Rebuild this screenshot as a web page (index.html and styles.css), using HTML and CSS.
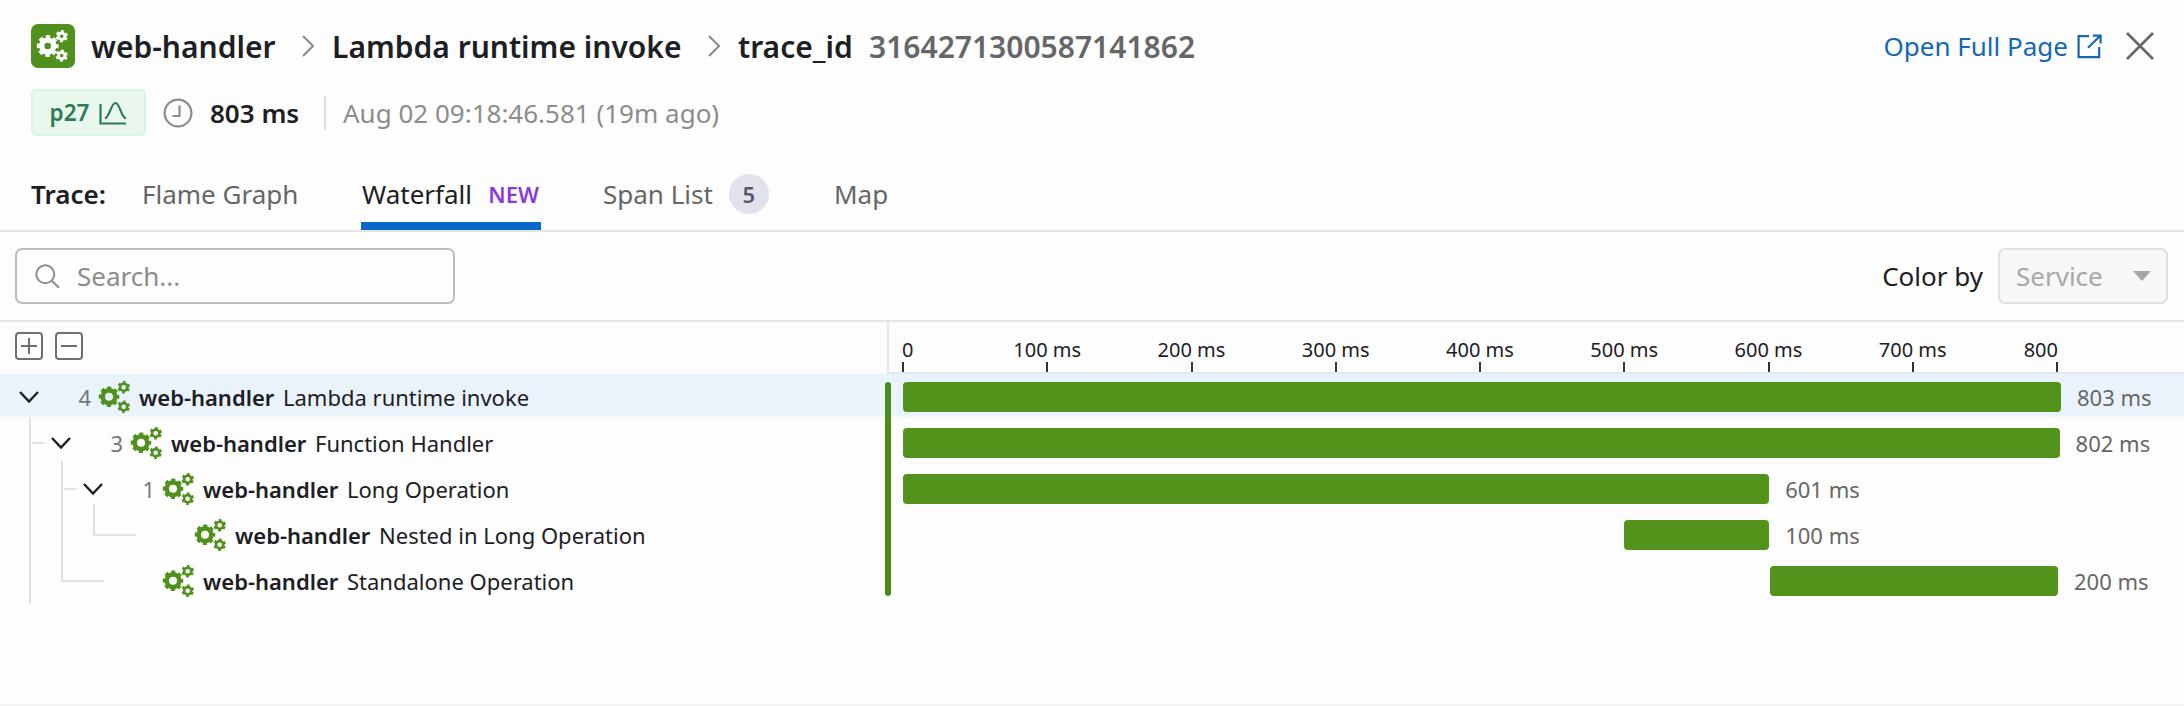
FILE: index.html
```html
<!DOCTYPE html>
<html lang="en">
<head>
    <meta charset="UTF-8">
    <meta name="viewport" content="width=device-width, initial-scale=1.0">
    <title>web-handler - Lambda runtime invoke</title>
    <link rel="stylesheet" href="styles.css">
</head>
<body>
    <!-- shared icons -->
    <svg class="defs" width="0" height="0">
        <symbol id="gears" viewBox="0 0 32 32">
            <g fill="none" stroke="currentColor">
                <circle cx="11" cy="15.7" r="6.3" stroke-width="4.6"/>
                <circle cx="11" cy="15.7" r="8.9" stroke-width="2.8" stroke-dasharray="4 2.99" stroke-dashoffset="2"/>
                <circle cx="25.7" cy="6.3" r="3.6" stroke-width="2.6"/>
                <circle cx="25.7" cy="6.3" r="5.2" stroke-width="2.2" stroke-dasharray="2.7 2.745" stroke-dashoffset="4.1"/>
                <circle cx="25.7" cy="25.7" r="3.6" stroke-width="2.6"/>
                <circle cx="25.7" cy="25.7" r="5.2" stroke-width="2.2" stroke-dasharray="2.7 2.745" stroke-dashoffset="4.1"/>
            </g>
        </symbol>
        <symbol id="arrow" viewBox="0 0 20 12">
            <path d="M1 1l9 9.5L19 1" fill="none" stroke="currentColor" stroke-width="2.4"/>
        </symbol>
        <symbol id="crumb" viewBox="0 0 12 22">
            <path d="M1 1l10 10L1 21" fill="none" stroke="currentColor" stroke-width="2"/>
        </symbol>
    </svg>

    <div class="panel">
        <div class="title">
            <span class="logo">
                <svg width="44" height="44" viewBox="0 0 44 44" fill="none" stroke="#fff">
                    <circle cx="16.7" cy="22" r="6" stroke-width="5.4"/>
                    <circle cx="16.7" cy="22" r="9.4" stroke-width="3" stroke-dasharray="4.4 2.983" stroke-dashoffset="2.2"/>
                    <circle cx="30.7" cy="12.2" r="3.2" stroke-width="2.8"/>
                    <circle cx="30.7" cy="12.2" r="5" stroke-width="2.2" stroke-dasharray="2.9 2.336" stroke-dashoffset="4"/>
                    <circle cx="30.7" cy="31.6" r="3.2" stroke-width="2.8"/>
                    <circle cx="30.7" cy="31.6" r="5" stroke-width="2.2" stroke-dasharray="2.9 2.336" stroke-dashoffset="4"/>
                </svg>
            </span>
            <span class="name service">web-handler</span>
            <svg class="crumb" width="12" height="22"><use href="#crumb"/></svg>
            <span class="name resource">Lambda runtime invoke</span>
            <svg class="crumb" width="12" height="22"><use href="#crumb"/></svg>
            <span class="name trace">trace_id</span>
            <span class="name id">3164271300587141862</span>
            <a class="open" href="javascript:;">Open Full Page
                <svg width="25" height="25" viewBox="0 0 25 25" fill="none" stroke="currentColor" stroke-width="2.2">
                    <path d="M12 2.2H1.6v21h20.6V13"/>
                    <path d="M11 13.8L23 2M15.8 1.6h7.8v8"/>
                </svg>
            </a>
            <a class="close" href="javascript:;">
                <svg width="28" height="28" viewBox="0 0 28 28" fill="none" stroke="currentColor" stroke-width="2.6">
                    <path d="M1 1l26 26M27 1L1 27"/>
                </svg>
            </a>
        </div>

        <div class="info">
            <span class="pct">p27
                <svg width="28" height="24" viewBox="0 0 28 24" fill="none" stroke="currentColor" stroke-width="2.2">
                    <path d="M1.5 3v19.5H27"/>
                    <path d="M6 17.5C11 15.500 12 2 16.500 2S21.500 15.500 27 17.500"/>
                </svg>
            </span>
            <svg class="clock" width="30" height="30" viewBox="0 0 30 30" fill="none" stroke="currentColor" stroke-width="2.2">
                <circle cx="15" cy="15" r="13.4"/>
                <path d="M16.500 7.500v10.500H9.500"/>
            </svg>
            <b class="total">803 ms</b>
            <span class="date">Aug 02 09:18:46.581 (19m ago)</span>
        </div>

        <nav class="tabs">
            <b class="label">Trace:</b>
            <a class="tab flame">Flame Graph</a>
            <a class="tab active">Waterfall <em>NEW</em></a>
            <a class="tab list">Span List <i>5</i></a>
            <a class="tab">Map</a>
        </nav>

        <div class="tools">
            <div class="search">
                <svg width="25" height="25" viewBox="0 0 25 25" fill="none" stroke="currentColor" stroke-width="2">
                    <circle cx="10.300" cy="10.300" r="9"/>
                    <path d="M16.800 16.800l7.200 7"/>
                </svg>
                Search...
            </div>
            <div class="color">
                <span>Color by</span>
                <div class="select">Service
                    <svg width="18" height="10" viewBox="0 0 18 10"><path d="M0 0h18L9 10z" fill="#a6a6a6"/></svg>
                </div>
            </div>
        </div>

        <div class="head">
            <div class="expand">
                <svg width="28" height="28" viewBox="0 0 28 28" fill="none" stroke="currentColor" stroke-width="2">
                    <rect x="1" y="1" width="26" height="26" rx="3"/>
                    <path d="M6 14h16M14 6v16"/>
                </svg>
                <svg width="28" height="28" viewBox="0 0 28 28" fill="none" stroke="currentColor" stroke-width="2">
                    <rect x="1" y="1" width="26" height="26" rx="3"/>
                    <path d="M6 14h16"/>
                </svg>
            </div>
            <div class="axis">
                <span>0</span>
                <span>100 ms</span>
                <span>200 ms</span>
                <span>300 ms</span>
                <span>400 ms</span>
                <span>500 ms</span>
                <span>600 ms</span>
                <span>700 ms</span>
                <span>800</span>
            </div>
        </div>

        <div class="rows">
            <div class="row selected">
                <div class="span">
                    <svg class="arrow" width="20" height="12"><use href="#arrow"/></svg>
                    <span class="count">4</span>
                    <svg class="gears" width="32" height="32"><use href="#gears"/></svg>
                    <b>web-handler</b><span>Lambda runtime invoke</span>
                </div>
                <div class="time">
                    <div class="bar" style="width: 100%"></div><span>803 ms</span>
                </div>
            </div>
            <div class="row">
                <div class="span level1">
                    <svg class="arrow" width="20" height="12"><use href="#arrow"/></svg>
                    <span class="count">3</span>
                    <svg class="gears" width="32" height="32"><use href="#gears"/></svg>
                    <b>web-handler</b><span>Function Handler</span>
                </div>
                <div class="time">
                    <div class="bar" style="width: 99.88%"></div><span>802 ms</span>
                </div>
            </div>
            <div class="row">
                <div class="span level2">
                    <svg class="arrow" width="20" height="12"><use href="#arrow"/></svg>
                    <span class="count">1</span>
                    <svg class="gears" width="32" height="32"><use href="#gears"/></svg>
                    <b>web-handler</b><span>Long Operation</span>
                </div>
                <div class="time">
                    <div class="bar" style="width: 74.8%"></div><span>601 ms</span>
                </div>
            </div>
            <div class="row">
                <div class="span level3">
                    <span class="arrow"></span>
                    <span class="count"></span>
                    <svg class="gears" width="32" height="32"><use href="#gears"/></svg>
                    <b>web-handler</b><span>Nested in Long Operation</span>
                </div>
                <div class="time">
                    <div class="bar" style="margin-left: 62.29%; width: 12.51%"></div><span>100 ms</span>
                </div>
            </div>
            <div class="row">
                <div class="span level2">
                    <span class="arrow"></span>
                    <span class="count"></span>
                    <svg class="gears" width="32" height="32"><use href="#gears"/></svg>
                    <b>web-handler</b><span>Standalone Operation</span>
                </div>
                <div class="time">
                    <div class="bar" style="margin-left: 74.87%; width: 24.87%"></div><span>200 ms</span>
                </div>
            </div>
            <!-- tree lines -->
            <svg class="tree" width="140" height="230" fill="none" stroke="#e2e2e2" stroke-width="2">
                <path d="M30 43v187M32 69h12"/>
                <path d="M62 87v120h42M64 115h12"/>
                <path d="M94 130v31h42"/>
            </svg>
            <div class="marker"></div>
        </div>
    </div>
</body>
</html>
```
FILE: styles.css
```css
*{
    margin: 0;
    padding: 0;
    box-sizing: border-box;
}
body{
    background: #fdfdfd;
    font-family: "Noto Sans", "Open Sans", sans-serif;
    font-size: 26px;
    color: #1c2024;
}
a{
    text-decoration: none;
}
svg{
    display: block;
    flex: none;
}
.defs{
    position: absolute;
}
.panel{
    width: 2184px;
    height: 706px;
    overflow: hidden;
    border-bottom: 2px solid #f5f5f5;
    white-space: nowrap;
}

/* title */
.title{
    display: flex;
    align-items: center;
    height: 92px;
    padding: 0 30px 0 31px;
}
.logo{
    width: 44px;
    height: 44px;
    border-radius: 7px;
    background: #4f911c;
}
.name{
    font-size: 30px;
    font-weight: 600;
}
.service{
    width: 211px;
    padding-left: 16px;
    margin-right: 16px;
}
.crumb{
    color: #8a8a8a;
}
.resource{
    width: 376px;
    margin-left: 18px;
}
.trace{
    width: 131px;
    margin-left: 18px;
}
.id{
    color: #666;
}
.open{
    display: flex;
    align-items: center;
    gap: 9px;
    margin-left: auto;
    color: #1668b0;
}
.close{
    margin-left: 24px;
    color: #666;
}

/* info */
.info{
    display: flex;
    align-items: center;
    height: 47px;
    margin-top: -3px;
    padding-left: 31px;
}
.pct{
    display: flex;
    align-items: center;
    justify-content: center;
    gap: 10px;
    width: 115px;
    height: 47px;
    border: 2px solid #d8f3e8;
    border-radius: 5px;
    background: #eaf7ec;
    color: #2a7d55;
    font-size: 22.5px;
    font-weight: 600;
}
.clock{
    margin-left: 17px;
    color: #8c8c8c;
}
.total{
    width: 114px;
    margin-left: 17px;
    font-weight: 600;
}
.date{
    padding-left: 17px;
    border-left: 2px solid #dedede;
    line-height: 34px;
    color: #8c8c8c;
}

/* tabs */
.tabs{
    display: flex;
    align-items: center;
    height: 96px;
    padding: 21px 0 0 31px;
    border-bottom: 2px solid #e4e4e4;
}
.label{
    width: 111px;
    font-weight: 600;
}
.tab{
    display: flex;
    align-items: center;
    height: 73px;
    color: #666;
}
.flame{
    width: 219px;
}
.active{
    width: 180px;
    justify-content: space-between;
    border-bottom: 8px solid #0869cb;
    padding: 8px 2px 0 1px;
    color: #1c2024;
}
.tab em{
    font-style: normal;
    font-size: 22px;
    font-weight: 600;
    color: #8b3bdc;
}
.list{
    width: 293px;
    padding-left: 62px;
}
.tab i{
    width: 40px;
    height: 40px;
    margin-left: 16px;
    border-radius: 50%;
    background: #e2e2ed;
    font: 600 22px/40px "Noto Sans", sans-serif;
    text-align: center;
    color: #555a68;
}

/* search and color select */
.tools{
    display: flex;
    justify-content: space-between;
    align-items: center;
    height: 90px;
    padding: 0 16px 0 15px;
    border-bottom: 2px solid #e6e6e6;
}
.search{
    display: flex;
    align-items: center;
    gap: 17px;
    width: 440px;
    height: 56px;
    padding-left: 18px;
    border: 2px solid #bdbdbd;
    border-radius: 7px;
    color: #8c8c8c;
}
.color{
    display: flex;
    align-items: center;
    gap: 15px;
}
.select{
    display: flex;
    align-items: center;
    justify-content: space-between;
    width: 170px;
    height: 56px;
    padding: 0 15px 0 16px;
    border: 2px solid #e0e0e0;
    border-radius: 7px;
    background: #f7f7f7;
    color: #a8a8a8;
}

/* axis */
.head{
    display: flex;
    height: 52px;
}
.expand{
    display: flex;
    gap: 12px;
    width: 887px;
    padding: 10px 0 0 15px;
    color: #6e6e6e;
}
.axis{
    display: flex;
    justify-content: space-between;
    flex: 1;
    padding: 15px 126px 0 13px;
    border-left: 2px solid #e6e6e6;
    border-bottom: 2px solid #e2e7ef;
}
.axis span{
    display: flex;
    flex-direction: column;
    align-items: center;
    width: 2px;
    font-size: 20px;
    line-height: 25px;
}
.axis span:first-child{
    align-items: flex-start;
}
.axis span:last-child{
    align-items: flex-end;
}
.axis span::after{
    content: "";
    width: 2px;
    height: 10px;
    background: #333;
}

/* rows */
.rows{
    position: relative;
    font-size: 22px;
}
.row{
    display: flex;
    height: 46px;
}
.selected{
    background: linear-gradient(#eaf3fc 42px, #f8f8f8 42px, #fdfdfd);
}
.span{
    display: flex;
    align-items: center;
    width: 903px;
    padding-left: 19px;
}
.level1{
    padding-left: 51px;
}
.level2{
    padding-left: 83px;
}
.level3{
    padding-left: 115px;
}
.span b{
    width: 144px;
    margin-left: 9px;
    font-weight: 600;
}
.arrow{
    width: 20px;
}
.count{
    width: 53px;
    padding-right: 1px;
    text-align: right;
    color: #777;
}
.gears{
    margin-left: 6px;
    color: #4f911c;
}
.time{
    display: flex;
    align-items: center;
    width: 1158px;
}
.bar{
    flex: none;
    height: 30px;
    border-radius: 4px;
    background: #52931b;
}
.time span{
    margin-left: 16px;
    color: #666;
}
.tree{
    position: absolute;
    left: 0;
    top: 0;
}
.marker{
    position: absolute;
    left: 885px;
    top: 8px;
    width: 6px;
    height: 214px;
    border-radius: 3px;
    background: #4a8c1c;
}
```
